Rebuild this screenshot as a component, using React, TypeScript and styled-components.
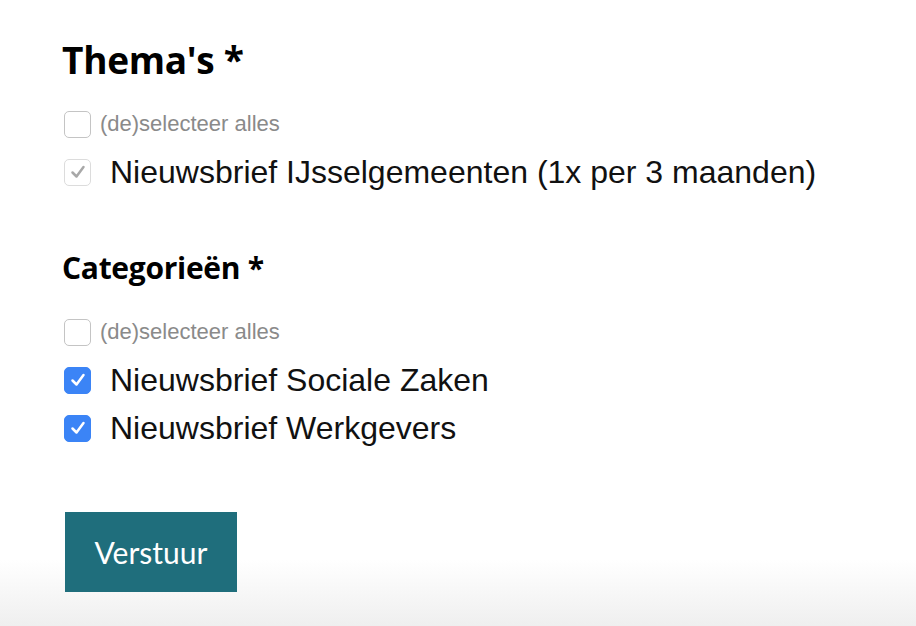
import React from 'react';
import styled, { createGlobalStyle } from 'styled-components';

const GlobalStyle = createGlobalStyle`
  html, body {
    margin: 0;
    padding: 0;
  }
  body {
    min-height: 626px;
    background: linear-gradient(to bottom, #ffffff 0px, #ffffff 560px, #efefef 626px);
    font-family: "Liberation Sans", Arial, sans-serif;
  }
`;

const Form = styled.form`
  display: flex;
  flex-direction: column;
  padding: 33px 0 0 62px;
`;

const Fieldset = styled.fieldset`
  border: 0;
  margin: 0;
  padding: 0;
  display: flex;
  flex-direction: column;
`;

const Legend = styled.h2<{ size: 'large' | 'medium' }>`
  margin: 0;
  font-family: "Open Sans", Lato, sans-serif;
  font-weight: 700;
  color: #000;
  letter-spacing: -0.3px;
  font-size: ${p => (p.size === 'large' ? '37px' : '30px')};
  line-height: ${p => (p.size === 'large' ? '54px' : '40px')};
  margin-bottom: ${p => (p.size === 'large' ? '13px' : '20px')};
`;

const Option = styled.label<{ small?: boolean }>`
  display: flex;
  align-items: center;
  height: 48px;
  gap: ${p => (p.small ? '9px' : '19px')};
  margin-left: 2px;
`;

const Box = styled.span<{ state: 'off' | 'disabled' | 'on' }>`
  width: 27px;
  height: 27px;
  box-sizing: border-box;
  border-radius: 5px;
  display: flex;
  align-items: center;
  justify-content: center;
  flex: none;
  background: ${p => (p.state === 'on' ? '#3b84f6' : '#fff')};
  border: 1px solid ${p => (p.state === 'on' ? '#3b84f6' : p.state === 'disabled' ? '#dcdcdc' : '#c4c4c4')};
`;

const LabelText = styled.span<{ small?: boolean }>`
  font-family: "Liberation Sans", Arial, sans-serif;
  font-size: ${p => (p.small ? '22px' : '32px')};
  color: ${p => (p.small ? '#8a8a8a' : '#111')};
`;

const Spacer = styled.div`
  height: 52px;
`;

const Submit = styled.button`
  margin-top: 60px;
  margin-left: 3px;
  width: 172px;
  height: 80px;
  border: 0;
  background: #1f6e7c;
  color: #fff;
  font-family: Lato, "Open Sans", sans-serif;
  font-size: 30px;
  font-weight: 400;
  cursor: pointer;
`;

const Check = ({ color }: { color: string }) => (
  <svg width="20" height="20" viewBox="0 0 20 20" fill="none">
    <path d="M4.5 10.5 L8.5 14.5 L15.5 5" stroke={color} strokeWidth="2.5" strokeLinecap="round" strokeLinejoin="round" />
  </svg>
);

const CheckItem = ({
  label,
  state,
  small,
}: {
  label: string;
  state: 'off' | 'disabled' | 'on';
  small?: boolean;
}) => (
  <Option small={small}>
    <Box state={state}>
      {state === 'on' && <Check color="#fff" />}
      {state === 'disabled' && <Check color="#a8a8a8" />}
    </Box>
    <LabelText small={small}>{label}</LabelText>
  </Option>
);

export default function App() {
  return (
    <>
      <GlobalStyle />
      <Form onSubmit={e => e.preventDefault()}>
        <Fieldset>
          <Legend size="large">Thema's *</Legend>
          <CheckItem small state="off" label="(de)selecteer alles" />
          <CheckItem state="disabled" label="Nieuwsbrief IJsselgemeenten (1x per 3 maanden)" />
        </Fieldset>
        <Spacer />
        <Fieldset>
          <Legend size="medium">Categorieën *</Legend>
          <CheckItem small state="off" label="(de)selecteer alles" />
          <CheckItem state="on" label="Nieuwsbrief Sociale Zaken" />
          <CheckItem state="on" label="Nieuwsbrief Werkgevers" />
        </Fieldset>
        <div>
          <Submit type="submit">Verstuur</Submit>
        </div>
      </Form>
    </>
  );
}
